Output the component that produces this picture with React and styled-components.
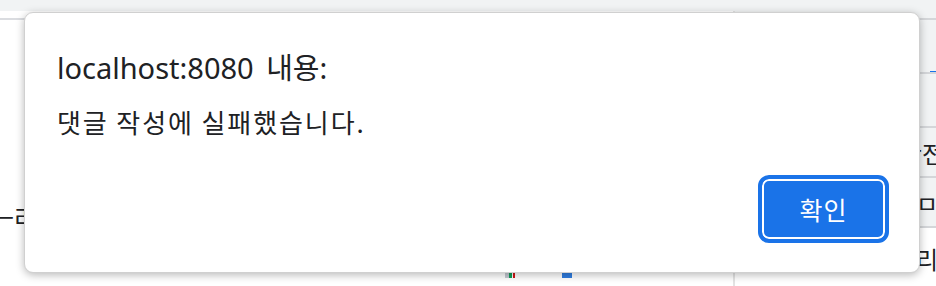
import React from "react";
import styled, { createGlobalStyle } from "styled-components";

const GlobalStyle = createGlobalStyle`
  html, body {
    margin: 0;
    padding: 0;
    background: #ffffff;
  }
  body {
    font-family: "Noto Sans", "Noto Sans CJK KR", sans-serif;
    color: #202124;
    overflow: hidden;
  }
`;

const Screen = styled.div`
  position: relative;
  width: 936px;
  height: 286px;
  overflow: hidden;
  display: flex;
  flex-direction: column;
  background: #ffffff;
`;

const TopBand = styled.div`
  height: 11px;
  flex-shrink: 0;
  background: #f1f3f4;
`;

const Body = styled.div`
  flex: 1;
  display: grid;
  grid-template-columns: 735px 1fr;
`;

const Main = styled.div`
  display: flex;
  flex-direction: column;
  border-right: 2px solid #e3e3e3;
`;

const MainHeader = styled.div`
  height: 7px;
  border-bottom: 2px solid #dadce0;
`;

const MainContent = styled.div`
  flex: 1;
  display: flex;
  flex-direction: column;
  justify-content: flex-start;
  padding-top: 182px;
`;

const LeftLabel = styled.div`
  font-family: "Noto Sans CJK KR", sans-serif;
  font-size: 24px;
  line-height: 30px;
  margin-left: -8px;
`;

const Chart = styled.div`
  display: flex;
  align-items: flex-end;
  margin-top: 32px;
  margin-left: 505px;
  height: 14px;
`;

const Bar = styled.div`
  width: ${(p) => p.$w}px;
  height: 14px;
  margin-left: ${(p) => p.$gap || 0}px;
  background: ${(p) => p.$color};
`;

const Side = styled.div`
  display: flex;
  flex-direction: column;
  background: #f1f3f4;
`;

const SideRow = styled.div`
  height: ${(p) => p.$h}px;
  border-bottom: ${(p) => (p.$last ? "none" : "2px solid #d4d6d9")};
  background: ${(p) => p.$bg || "#f1f3f4"};
  display: flex;
  align-items: center;
  justify-content: flex-end;
  font-family: "Noto Sans CJK KR", sans-serif;
  font-size: 24px;
  color: #202124;
  white-space: nowrap;
  overflow: hidden;
`;

const TabMark = styled.div`
  align-self: flex-end;
  width: 6px;
  height: 3px;
  margin-bottom: -2px;
  background: #1a73e8;
`;

const SideText = styled.span`
  margin-right: ${(p) => p.$mr || 0}px;
`;

const Caret = styled.span`
  display: inline-block;
  width: 2px;
  height: 22px;
  background: #1a73e8;
  vertical-align: middle;
`;

const Dialog = styled.div`
  position: absolute;
  left: 24px;
  top: 12px;
  width: 896px;
  height: 261px;
  box-sizing: border-box;
  background: #ffffff;
  border: 1px solid #d0d0d0;
  border-radius: 9px;
  box-shadow: 0 2px 8px rgba(0, 0, 0, 0.28);
  display: flex;
  flex-direction: column;
  padding: 35px 30px 29px 32px;
`;

const Title = styled.h1`
  margin: 0;
  font-family: "Noto Sans", "Noto Sans CJK KR", sans-serif;
  font-weight: 400;
  font-size: 29px;
  word-spacing: 5px;
  line-height: 40px;
  color: #202124;
`;

const Message = styled.p`
  margin: 16px 0 0;
  font-family: "Noto Sans CJK KR", sans-serif;
  font-size: 26px;
  letter-spacing: 1.9px;
  line-height: 36px;
  color: #202124;
`;

const Footer = styled.div`
  margin-top: auto;
  display: flex;
  justify-content: flex-end;
`;

const OkButton = styled.button`
  width: 131px;
  height: 68px;
  box-sizing: border-box;
  border: 4px solid #1a73e8;
  border-radius: 11px;
  background: #1a73e8;
  box-shadow: inset 0 0 0 2px #ffffff;
  color: #ffffff;
  font-family: "Noto Sans CJK KR", sans-serif;
  font-size: 25px;
  letter-spacing: 1px;
  padding: 0;
  cursor: pointer;
`;

export default function App() {
  return (
    <>
      <GlobalStyle />
      <Screen>
        <TopBand />
        <Body>
          <Main>
            <MainHeader />
            <MainContent>
              <LeftLabel>ㅡ리</LeftLabel>
              <Chart>
                <Bar $w={4} $color="#c5cad3" />
                <Bar $w={3} $color="#0f9d58" />
                <Bar $w={2} $color="#d01716" $gap={1} />
                <Bar $w={10} $color="#2f7de1" $gap={47} />
              </Chart>
            </MainContent>
          </Main>
          <Side>
            <SideRow $h={7} />
            <SideRow $h={52}>
              <TabMark />
            </SideRow>
            <SideRow $h={52} />
            <SideRow $h={48}>
              <SideText $mr={-8}>안전</SideText>
            </SideRow>
            <SideRow $h={48}>
              <SideText $mr={-2}>ㅁ</SideText>
            </SideRow>
            <SideRow $h={60} $bg="#ffffff" $last>
              <SideText $mr={-4}>
                리<Caret />
              </SideText>
            </SideRow>
          </Side>
        </Body>
        <Dialog role="alertdialog">
          <Title>localhost:8080 내용:</Title>
          <Message>댓글 작성에 실패했습니다.</Message>
          <Footer>
            <OkButton>확인</OkButton>
          </Footer>
        </Dialog>
      </Screen>
    </>
  );
}
